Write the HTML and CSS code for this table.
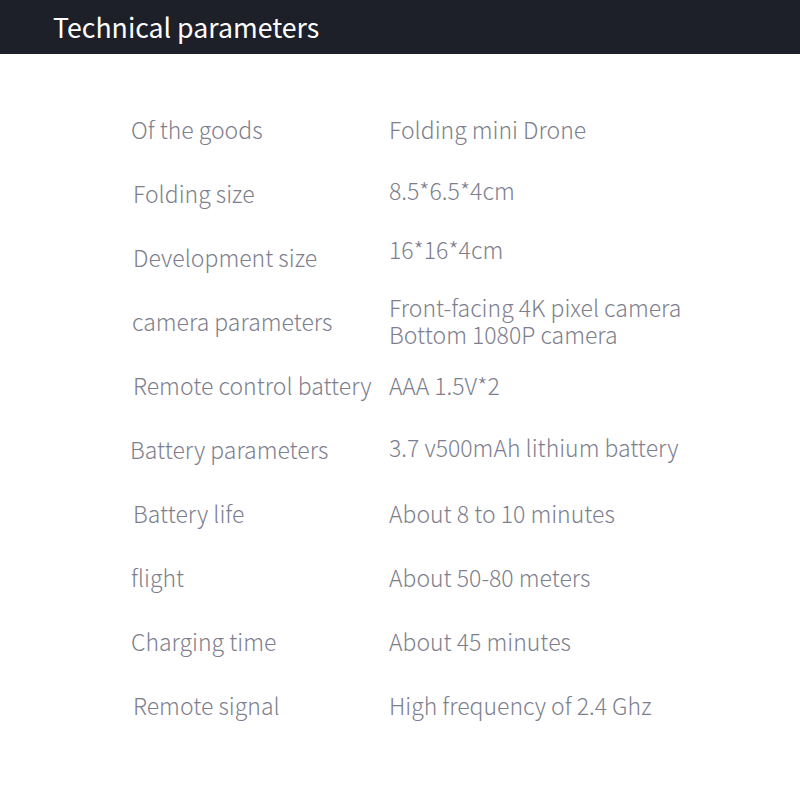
FILE: index.html
```html
<!DOCTYPE html>
<html>
<head>
<meta charset="utf-8">
<link rel="stylesheet" href="styles.css">
</head>
<body>
<header class="bar"><h1 class="title">Technical parameters</h1></header>
<main class="specs">
  <div class="row"><span class="label">Of the goods</span><span class="value">Folding mini Drone</span></div>
  <div class="row"><span class="label l2">Folding size</span><span class="value up3">8.5*6.5*4cm</span></div>
  <div class="row"><span class="label l2">Development size</span><span class="value up8">16*16*4cm</span></div>
  <div class="row"><span class="label l1">camera parameters</span><span class="value"><span class="line">Front-facing 4K pixel camera</span><span class="line">Bottom 1080P camera</span></span></div>
  <div class="row"><span class="label l2">Remote control battery</span><span class="value">AAA 1.5V*2</span></div>
  <div class="row"><span class="label lm1">Battery parameters</span><span class="value up2">3.7 v500mAh lithium battery</span></div>
  <div class="row"><span class="label l2">Battery life</span><span class="value">About 8 to 10 minutes</span></div>
  <div class="row"><span class="label">flight</span><span class="value">About 50-80 meters</span></div>
  <div class="row"><span class="label">Charging time</span><span class="value">About 45 minutes</span></div>
  <div class="row"><span class="label l2">Remote signal</span><span class="value">High frequency of 2.4 Ghz</span></div>
</main>
</body>
</html>
```
FILE: styles.css
```css
html, body {
  margin: 0;
  padding: 0;
  background: #ffffff;
}
body {
  width: 800px;
  height: 810px;
  overflow: hidden;
  font-family: "Noto Sans CJK SC", "Noto Sans", sans-serif;
}
.bar {
  background: #1d1f29;
  height: 54px;
  display: flex;
  align-items: center;
  padding-left: 53px;
}
.title {
  margin: 0;
  color: #ffffff;
  font-size: 26.7px;
  font-weight: 400;
  line-height: 1;
}
.specs {
  padding: 43px 0 0 131px;
  display: flex;
  flex-direction: column;
}
.row {
  display: grid;
  grid-template-columns: 258px 1fr;
  align-items: center;
  min-height: 64px;
  color: #7e7f8e;
  font-size: 23px;
  font-weight: 300;
  line-height: 27px;
}
.value {
  display: flex;
  flex-direction: column;
}
.line {
  display: block;
}
.l1 { padding-left: 1px; }
.l2 { padding-left: 2px; }
.lm1 { margin-left: -1px; }
.up2 { margin-top: -4px; }
.up3 { margin-top: -6px; }
.up8 { margin-top: -16px; }
```
